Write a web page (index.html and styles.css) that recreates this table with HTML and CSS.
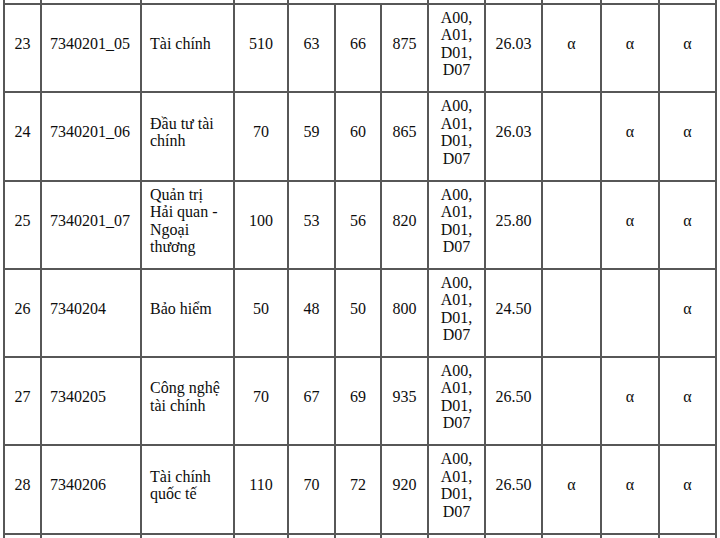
FILE: index.html
```html
<!DOCTYPE html>
<html lang="vi">
<head>
<meta charset="utf-8">
<title>Bảng điểm chuẩn</title>
<link rel="stylesheet" href="styles.css">
</head>
<body>
<div class="table">
  <div class="row strip">
    <div class="c"></div><div class="c"></div><div class="c"></div><div class="c"></div>
    <div class="c span3"></div>
    <div class="c"></div><div class="c"></div><div class="c"></div><div class="c"></div><div class="c"></div>
  </div>

  <div class="row h88">
    <div class="c num">23</div><div class="c txt">7340201_05</div><div class="c txt">Tài chính</div>
    <div class="c num">510</div><div class="c num">63</div><div class="c num">66</div><div class="c num">875</div>
    <div class="c num">A00, A01, D01, D07</div><div class="c num">26.03</div>
    <div class="c num">α</div><div class="c num">α</div><div class="c num">α</div>
  </div>

  <div class="row h89">
    <div class="c num">24</div><div class="c txt">7340201_06</div><div class="c txt">Đầu tư tài chính</div>
    <div class="c num">70</div><div class="c num">59</div><div class="c num">60</div><div class="c num">865</div>
    <div class="c num">A00, A01, D01, D07</div><div class="c num">26.03</div>
    <div class="c num"></div><div class="c num">α</div><div class="c num">α</div>
  </div>

  <div class="row h88">
    <div class="c num">25</div><div class="c txt">7340201_07</div><div class="c txt">Quản trị Hải quan - Ngoại thương</div>
    <div class="c num">100</div><div class="c num">53</div><div class="c num">56</div><div class="c num">820</div>
    <div class="c num">A00, A01, D01, D07</div><div class="c num">25.80</div>
    <div class="c num"></div><div class="c num">α</div><div class="c num">α</div>
  </div>

  <div class="row h88">
    <div class="c num">26</div><div class="c txt">7340204</div><div class="c txt">Bảo hiểm</div>
    <div class="c num">50</div><div class="c num">48</div><div class="c num">50</div><div class="c num">800</div>
    <div class="c num">A00, A01, D01, D07</div><div class="c num">24.50</div>
    <div class="c num"></div><div class="c num"></div><div class="c num">α</div>
  </div>

  <div class="row h88">
    <div class="c num">27</div><div class="c txt">7340205</div><div class="c txt">Công nghệ tài chính</div>
    <div class="c num">70</div><div class="c num">67</div><div class="c num">69</div><div class="c num">935</div>
    <div class="c num">A00, A01, D01, D07</div><div class="c num">26.50</div>
    <div class="c num"></div><div class="c num">α</div><div class="c num">α</div>
  </div>

  <div class="row h89">
    <div class="c num">28</div><div class="c txt">7340206</div><div class="c txt">Tài chính quốc tế</div>
    <div class="c num">110</div><div class="c num">70</div><div class="c num">72</div><div class="c num">920</div>
    <div class="c num">A00, A01, D01, D07</div><div class="c num">26.50</div>
    <div class="c num">α</div><div class="c num">α</div><div class="c num">α</div>
  </div>

  <div class="row tail">
    <div class="c"></div><div class="c"></div><div class="c"></div><div class="c"></div><div class="c"></div><div class="c"></div>
    <div class="c"></div><div class="c"></div><div class="c"></div><div class="c"></div><div class="c"></div><div class="c"></div>
  </div>
</div>
</body>
</html>
```

FILE: styles.css
```css
html, body {
  margin: 0;
  padding: 0;
  background: #ffffff;
  overflow: hidden;
}

body {
  width: 720px;
  height: 538px;
  font-family: "Liberation Serif", "Times New Roman", serif;
  font-size: 16px;
  line-height: 17.5px;
  color: #0d0d0d;
}

.table {
  margin-left: 3px;
  width: 714px;
  border-left: 2px solid #575757;
  box-sizing: border-box;
}

.row {
  display: grid;
  grid-template-columns: 37px 100px 93px 54px 47px 46px 47px 57px 57px 59px 58px 57px;
}

.c {
  box-sizing: border-box;
  border-right: 2px solid #575757;
  border-bottom: 2px solid #575757;
  display: flex;
  align-items: center;
  padding: 0 0 9px 0;
  min-width: 0;
}

.num {
  justify-content: center;
  text-align: center;
  padding-left: 4px;
  padding-right: 4px;
}

.txt {
  justify-content: flex-start;
  text-align: left;
  padding-left: 8px;
  padding-right: 8px;
}

.span3 {
  grid-column: span 3;
}

.strip .c {
  height: 5px;
  padding: 0;
}

.h88 .c { height: 88px; }
.h89 .c { height: 89px; }

.tail .c {
  height: 20px;
  border-bottom: none;
  padding: 0;
}
```
